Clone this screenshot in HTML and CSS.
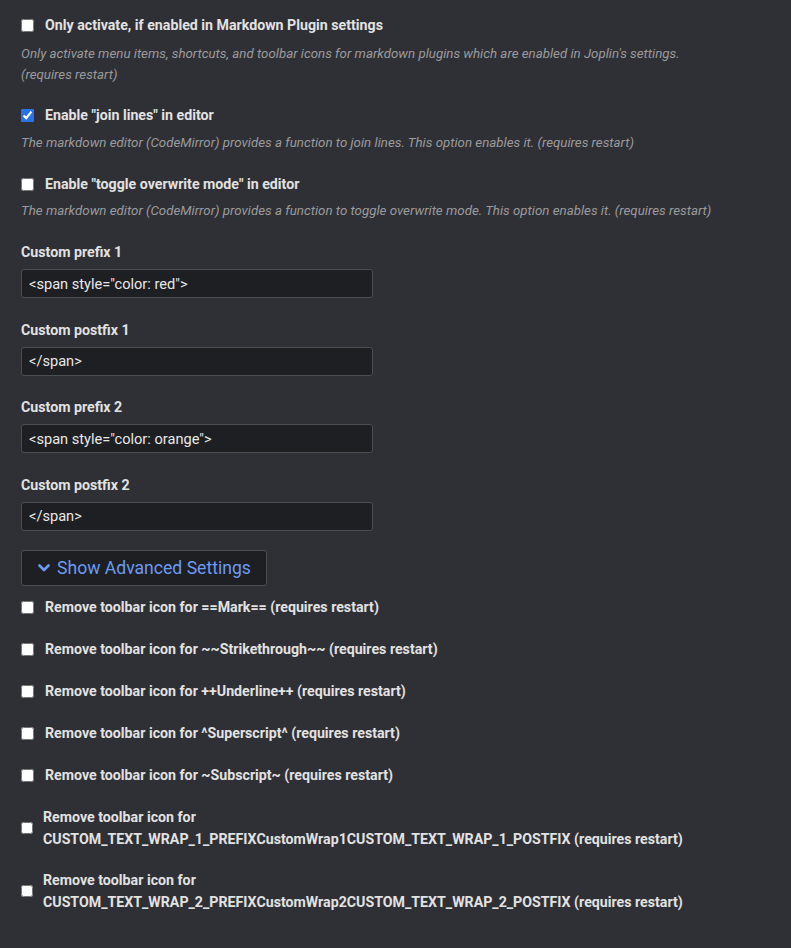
FILE: index.html
```html
<!DOCTYPE html>
<html>
<head>
<meta charset="utf-8">
<link rel="stylesheet" href="styles.css">
</head>
<body>
<div class="page">
  <div class="setting check first">
    <label class="row"><input type="checkbox" class="cb"><span class="label">Only activate, if enabled in Markdown Plugin settings</span></label>
    <div class="desc">Only activate menu items, shortcuts, and toolbar icons for markdown plugins which are enabled in Joplin's settings.<br>(requires restart)</div>
  </div>
  <div class="setting check">
    <label class="row"><input type="checkbox" class="cb" checked><span class="label">Enable "join lines" in editor</span></label>
    <div class="desc">The markdown editor (CodeMirror) provides a function to join lines. This option enables it. (requires restart)</div>
  </div>
  <div class="setting check third">
    <label class="row"><input type="checkbox" class="cb"><span class="label">Enable "toggle overwrite mode" in editor</span></label>
    <div class="desc">The markdown editor (CodeMirror) provides a function to toggle overwrite mode. This option enables it. (requires restart)</div>
  </div>
  <div class="setting text">
    <div class="label">Custom prefix 1</div>
    <input class="field" type="text" value="&lt;span style=&quot;color: red&quot;&gt;">
  </div>
  <div class="setting text">
    <div class="label">Custom postfix 1</div>
    <input class="field" type="text" value="&lt;/span&gt;">
  </div>
  <div class="setting text">
    <div class="label">Custom prefix 2</div>
    <input class="field" type="text" value="&lt;span style=&quot;color: orange&quot;&gt;">
  </div>
  <div class="setting text">
    <div class="label">Custom postfix 2</div>
    <input class="field" type="text" value="&lt;/span&gt;">
  </div>
  <button class="adv"><svg class="chev" viewBox="0 0 12 8" width="12" height="8"><path d="M1.5 1.5 L6 6 L10.5 1.5" fill="none" stroke="currentColor" stroke-width="2.6" stroke-linecap="round" stroke-linejoin="round"/></svg>Show Advanced Settings</button>
  <div class="adv-list">
    <label class="row item"><input type="checkbox" class="cb"><span class="label">Remove toolbar icon for ==Mark== (requires restart)</span></label>
    <label class="row item"><input type="checkbox" class="cb"><span class="label">Remove toolbar icon for ~~Strikethrough~~ (requires restart)</span></label>
    <label class="row item"><input type="checkbox" class="cb"><span class="label">Remove toolbar icon for ++Underline++ (requires restart)</span></label>
    <label class="row item"><input type="checkbox" class="cb"><span class="label">Remove toolbar icon for ^Superscript^ (requires restart)</span></label>
    <label class="row item last-single"><input type="checkbox" class="cb"><span class="label">Remove toolbar icon for ~Subscript~ (requires restart)</span></label>
    <label class="row item two"><input type="checkbox" class="cb sm"><span class="label">Remove toolbar icon for<br>CUSTOM_TEXT_WRAP_1_PREFIXCustomWrap1CUSTOM_TEXT_WRAP_1_POSTFIX (requires restart)</span></label>
    <label class="row item two"><input type="checkbox" class="cb sm"><span class="label">Remove toolbar icon for<br>CUSTOM_TEXT_WRAP_2_PREFIXCustomWrap2CUSTOM_TEXT_WRAP_2_POSTFIX (requires restart)</span></label>
  </div>
</div>
</body>
</html>
```
FILE: styles.css
```css
html, body {
  margin: 0;
  padding: 0;
  background: #2f3035;
}
body {
  font-family: Roboto, "Liberation Sans", sans-serif;
  color: #dedede;
  width: 791px;
  height: 948px;
  overflow: hidden;
}
.page {
  padding: 15px 0 0 21px;
  display: flex;
  flex-direction: column;
}
.row {
  display: flex;
  align-items: center;
  gap: 11px;
}
.cb {
  margin: 0;
  width: 13px;
  height: 13px;
  accent-color: #2a73e8;
}
.label {
  font-size: 14.2px;
  font-weight: 700;
  color: #e2e2e2;
  line-height: 20px;
}
.desc {
  font-size: 13.3px;
  font-style: italic;
  color: #9b9b9d;
  line-height: 21px;
  margin-top: 7px;
}
.setting.check {
  margin-bottom: 21px;
}
.setting.check.first {
  margin-bottom: 20px;
}
.setting.check.first .desc {
  margin-top: 8px;
}
.setting.check.third .desc {
  margin-top: 6px;
}
.setting.text {
  margin-bottom: 21.5px;
}
.setting.text .label {
  margin-bottom: 7px;
}
.field {
  box-sizing: border-box;
  width: 352px;
  height: 29px;
  background: #1e1f22;
  border: 1px solid #4c4d52;
  border-radius: 3px;
  color: #e8e8e8;
  font-family: Roboto, "Liberation Sans", sans-serif;
  font-size: 14.6px;
  padding: 0 7px;
  outline: none;
}
.adv {
  align-self: flex-start;
  box-sizing: border-box;
  height: 36px;
  width: 246px;
  margin-top: -2px;
  background: #1e1f22;
  border: 1px solid #4c4d52;
  border-radius: 3px;
  color: #6b9bf5;
  font-family: Roboto, "Liberation Sans", sans-serif;
  font-size: 17.6px;
  display: flex;
  align-items: center;
  padding: 0 0 0 16px;
  gap: 7px;
}
.chev {
  display: block;
}
.adv-list {
  display: flex;
  flex-direction: column;
  margin-top: 11px;
}
.item {
  height: 20px;
  margin-bottom: 22px;
}
.item.last-single {
  margin-bottom: 21px;
}
.item.two {
  height: auto;
  gap: 10px;
  margin-bottom: 19px;
}
.item.two .label {
  line-height: 22px;
}
.cb.sm {
  width: 12px;
  height: 12px;
}
```
